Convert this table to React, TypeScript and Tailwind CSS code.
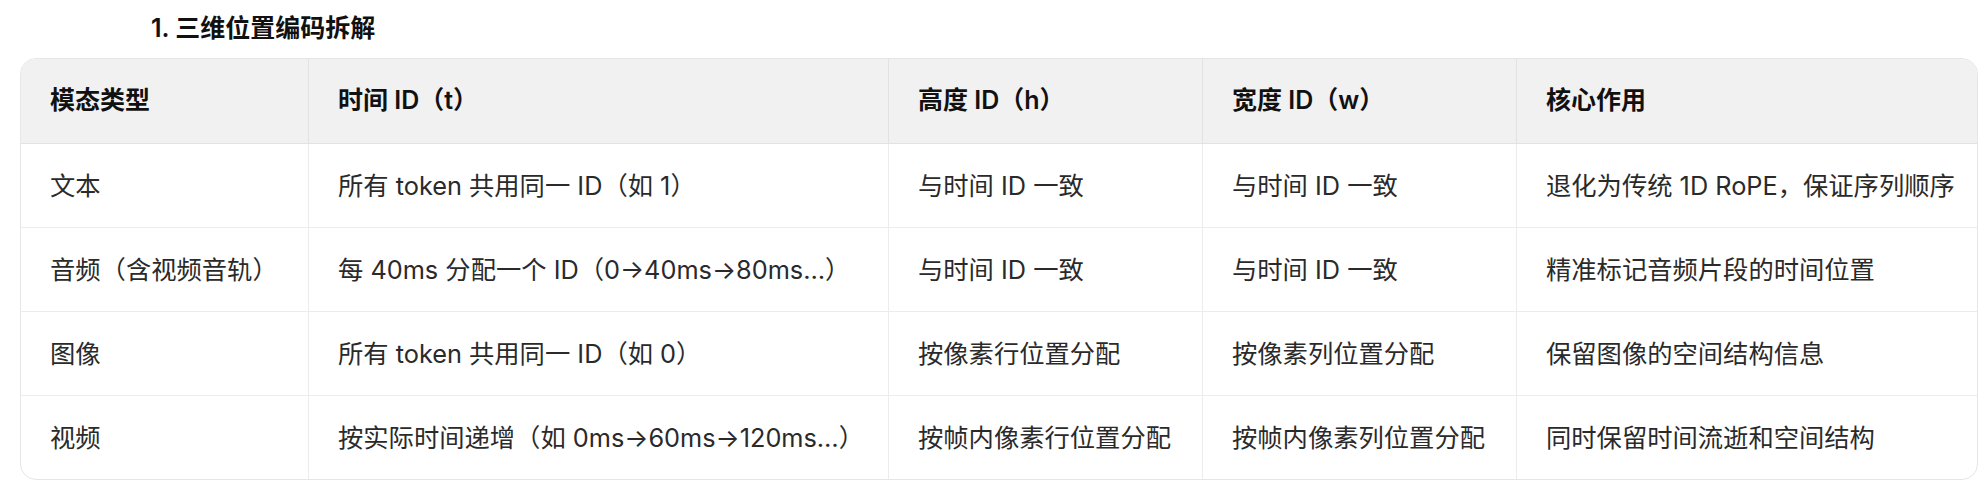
import React from "react";

const headers = ["模态类型", "时间 ID（t）", "高度 ID（h）", "宽度 ID（w）", "核心作用"];
const rows = [
  ["文本", "所有 token 共用同一 ID（如 1）", "与时间 ID 一致", "与时间 ID 一致", "退化为传统 1D RoPE，保证序列顺序"],
  ["音频（含视频音轨）", "每 40ms 分配一个 ID（0→40ms→80ms…）", "与时间 ID 一致", "与时间 ID 一致", "精准标记音频片段的时间位置"],
  ["图像", "所有 token 共用同一 ID（如 0）", "按像素行位置分配", "按像素列位置分配", "保留图像的空间结构信息"],
  ["视频", "按实际时间递增（如 0ms→60ms→120ms…）", "按帧内像素行位置分配", "按帧内像素列位置分配", "同时保留时间流逝和空间结构"],
];

export default function App() {
  return (
    <div
      className="w-[1986px] h-[492px] bg-white overflow-hidden"
      style={{ fontFamily: 'Inter, "Noto Sans CJK SC", sans-serif' }}
    >
      <div className="pl-[151px] pt-[13px] h-[58px]">
        <h3 className="text-[25px] leading-[30px] font-semibold text-[#111]">1. 三维位置编码拆解</h3>
      </div>
      <div className="ml-[20px] w-[1958px] border border-[#e6e6e6] rounded-[16px] overflow-hidden">
        <div className="grid grid-cols-[287px_580px_314px_314px_1fr] bg-[#f1f1f1] border-b border-[#e2e2e2]">
          {headers.map((h, i) => (
            <div
              key={i}
              className={`h-[84px] pl-[29px] pr-[8px] flex items-center whitespace-nowrap text-[25px] font-semibold text-[#111] ${i > 0 ? "border-l border-[#e2e2e2]" : ""}`}
            >
              {h}
            </div>
          ))}
        </div>
        {rows.map((r, ri) => (
          <div
            key={ri}
            className={`grid grid-cols-[287px_580px_314px_314px_1fr] ${ri < rows.length - 1 ? "border-b border-[#ececec]" : ""}`}
          >
            {r.map((c, i) => (
              <div
                key={i}
                className={`h-[83px] pl-[29px] pr-[4px] flex items-center whitespace-nowrap text-[25.3px] text-[#2a2a2a] ${i > 0 ? "border-l border-[#ececec]" : ""}`}
              >
                {c}
              </div>
            ))}
          </div>
        ))}
      </div>
    </div>
  );
}
